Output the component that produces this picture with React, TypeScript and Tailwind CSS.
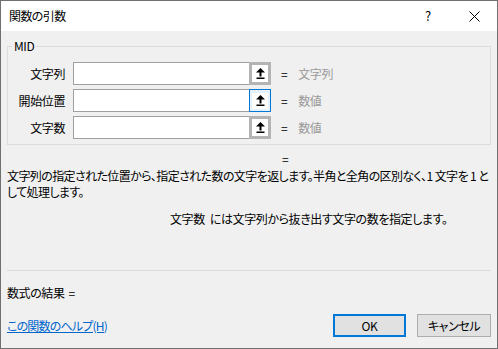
import React from 'react';

interface ArgRowProps {
  label: string;
  value: string;
  focused?: boolean;
}

const UpArrow = () => (
  <svg width="9" height="11" viewBox="0 0 9 11" className="block">
    <polygon points="4.5,0 9,4.5 0,4.5" fill="#000" />
    <rect x="3.5" y="4" width="2" height="4.5" fill="#000" />
    <rect x="0.5" y="9.5" width="8" height="1.5" fill="#000" />
  </svg>
);

const ArgRow: React.FC<ArgRowProps> = ({ label, value, focused }) => {
  return (
    <div className="flex items-center h-[23px]">
      <div className="w-[57px] text-right whitespace-nowrap">{label}</div>
      <div className="ml-[8px] flex w-[198px] h-[23px]">
        <div className="flex-1 bg-white border-y border-l border-[#a0a0a0]" />
        {focused ? (
          <div className="w-[22px] h-full border border-[#0078d7] bg-[#e5f1fb] flex items-center justify-center">
            <div className="w-[16px] h-[16px] bg-white flex items-center justify-center">
              <UpArrow />
            </div>
          </div>
        ) : (
          <div className="w-[22px] h-full border-[3px] border-[#b4b4b4] bg-white flex items-center justify-center">
            <UpArrow />
          </div>
        )}
      </div>
      <span className="ml-[10px]">=</span>
      <span className="ml-[11px] text-[#9a9a9a] whitespace-nowrap">{value}</span>
    </div>
  );
};

export default function App() {
  return (
    <div className="w-[498px] h-[349px] border border-[#707070] flex flex-col bg-[#f0f0f0] text-[12px] leading-[16px] tracking-[-0.4px] text-black font-['Noto_Sans_CJK_JP',sans-serif] [font-feature-settings:'palt'] overflow-hidden">
      {/* Title bar */}
      <div className="h-[30px] bg-white flex items-center shrink-0">
        <div className="pl-[8px] flex-1 tracking-[-0.6px]">関数の引数</div>
        <div className="w-[46px] h-full flex items-center justify-center text-[13px]">?</div>
        <div className="w-[46px] h-full flex items-center justify-center">
          <svg width="11" height="11" viewBox="0 0 11 11">
            <path d="M0.5 0.5 L10.5 10.5 M10.5 0.5 L0.5 10.5" stroke="#000" strokeWidth="1" />
          </svg>
        </div>
      </div>

      {/* Body */}
      <div className="flex-1 flex flex-col px-[6px] pt-[7px]">
        <fieldset className="border border-[#dcdcdc] pt-[8px] pb-[5px]">
          <legend className="ml-[4px] px-[2px]">MID</legend>
          <div className="flex flex-col gap-[4px]">
            <ArgRow label="文字列" value="文字列" />
            <ArgRow label="開始位置" value="数値" focused />
            <ArgRow label="文字数" value="数値" />
          </div>
        </fieldset>

        <div className="mt-[6px] pl-[275px]">=</div>
        <div className="mt-[1px] whitespace-pre tracking-[-0.6px]">
          文字列の指定された位置から、指定された数の文字を返します。半角と全角の区別なく、1 文字を 1 と
        </div>
        <div className="whitespace-nowrap tracking-[-0.6px]">して処理します。</div>

        <div className="mt-[11px] pl-[163px] whitespace-nowrap">
          <span className="mr-[5px]">文字数</span>には文字列から抜き出す文字の数を指定します。
        </div>

        <div className="mt-[43px] border-t border-[#dcdcdc]" />

        <div className="mt-[14px] whitespace-nowrap">
          数式の結果<span className="ml-[4px]">=</span>
        </div>

        <div className="mt-[13px] flex items-center">
          <a className="flex-1 text-[#0066cc] underline whitespace-nowrap cursor-pointer tracking-[-0.8px]">この関数のヘルプ(H)</a>
          <button className="w-[73px] h-[23px] border-2 border-[#0078d7] bg-[#e1e1e1]">OK</button>
          <button className="ml-[11px] w-[74px] h-[23px] border border-[#adadad] bg-[#e1e1e1]">キャンセル</button>
        </div>
      </div>
    </div>
  );
}
